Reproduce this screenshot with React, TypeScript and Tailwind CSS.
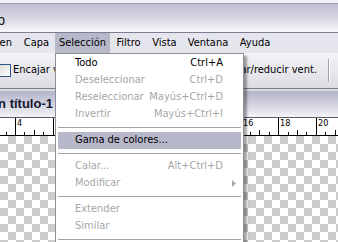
import React from "react";

const UI = "font-['DejaVu_Sans_Condensed','DejaVu_Sans',sans-serif] [font-stretch:condensed]";

type Item =
  | { sep: true }
  | { sep?: false; t: string; s?: string; en?: boolean; hl?: boolean; sub?: boolean };

const items: Item[] = [
  { t: "Todo", s: "Ctrl+A", en: true },
  { t: "Deseleccionar", s: "Ctrl+D" },
  { t: "Reseleccionar", s: "Mayús+Ctrl+D" },
  { t: "Invertir", s: "Mayús+Ctrl+I" },
  { sep: true },
  { t: "Gama de colores...", en: true, hl: true },
  { sep: true },
  { t: "Calar...", s: "Alt+Ctrl+D" },
  { t: "Modificar", sub: true },
  { sep: true },
  { t: "Extender" },
  { t: "Similar" },
  { sep: true },
  { t: "Transformar selección" },
];

function Ruler() {
  const majors: number[] = [];
  for (let i = -1; i < 10; i++) majors.push(15 + i * 37.6);
  const ticks: React.ReactNode[] = [];
  majors.forEach((m, i) => {
    const x = Math.round(m) + 0.5;
    ticks.push(<line key={"M" + i} x1={x} y1={0} x2={x} y2={17} stroke="#000" />);
    ticks.push(
      <text key={"L" + i} x={Math.round(m) + 2} y={8} fontSize={9} fill="#000" fontFamily="DejaVu Sans Condensed, DejaVu Sans, sans-serif">
        {2 + i * 2}
      </text>
    );
    [1, 2, 3].forEach((q) => {
      const tx = Math.round(m + q * 9.4) + 0.5;
      const h = q === 2 ? 5 : 3;
      ticks.push(<line key={"m" + i + q} x1={tx} y1={17 - h} x2={tx} y2={17} stroke="#000" />);
    });
  });
  return (
    <svg width={338} height={18} className="block" shapeRendering="crispEdges">
      <rect x={0} y={0} width={338} height={18} fill="#fff" />
      {ticks}
      <line x1={0} y1={17.5} x2={338} y2={17.5} stroke="#000" />
    </svg>
  );
}

function Checker() {
  return (
    <svg width={338} height={110} className="block" shapeRendering="crispEdges">
      <defs>
        <pattern id="chk" x={0} y={0} width={16} height={16} patternUnits="userSpaceOnUse">
          <rect x={0} y={0} width={16} height={16} fill="#ffffff" />
          <rect x={8} y={0} width={8} height={8} fill="#cccccc" />
          <rect x={0} y={8} width={8} height={8} fill="#cccccc" />
        </pattern>
      </defs>
      <rect x={0} y={0} width={338} height={110} fill="url(#chk)" />
    </svg>
  );
}

function Menu() {
  return (
    <div className={`absolute left-[55px] top-[53px] w-[189px] border border-[#8f8f98] bg-white px-[2px] pt-[1px] pb-[2px] shadow-[3px_3px_2px_rgba(0,0,0,0.35)] text-[11px] ${UI}`}>
      {items.map((it, i) =>
        it.sep ? (
          <div key={i} className="h-[9px] flex items-center">
            <div className="h-px w-full bg-[#a4a4a8]" />
          </div>
        ) : (
          <div
            key={i}
            className={`h-[17px] flex items-center justify-between pl-[17px] pr-[18px] ${it.hl ? "bg-[#b8b8cb]" : ""} ${it.en ? "text-black" : "text-[#a6a6a6]"}`}
          >
            <span className="whitespace-nowrap">{it.t}</span>
            {it.s ? <span className="whitespace-nowrap">{it.s}</span> : null}
            {it.sub ? (
              <svg width={4} height={7} className="mr-[-13px]" viewBox="0 0 4 7">
                <path d="M0 0 L4 3.5 L0 7 Z" fill="#a6a6a6" />
              </svg>
            ) : null}
          </div>
        )
      )}
    </div>
  );
}

export default function App() {
  const menubar: { t: string; w: string; hl?: boolean }[] = [
    { t: "Capa", w: "w-[37px]" },
    { t: "Selección", w: "w-[55px]", hl: true },
    { t: "Filtro", w: "w-[37px]" },
    { t: "Vista", w: "w-[35px]" },
    { t: "Ventana", w: "w-[52px]" },
    { t: "Ayuda", w: "w-[42px]" },
  ];
  return (
    <div className={`relative w-[338px] h-[242px] overflow-hidden bg-white text-[11px] text-black ${UI}`}>
      {/* top strip */}
      <div className="h-[3px] bg-[#f1f1f4]" />
      <div className="h-px bg-[#a4a4b8]" />
      {/* title bar */}
      <div className="h-[28px] bg-gradient-to-b from-[#bdbdd1] via-[#d6d6e3] to-[#f7f7fa] flex">
        <div className="w-[5px] overflow-hidden flex justify-end pt-[8px]">
          <span className="whitespace-nowrap text-[14px] leading-[16px] font-['Liberation_Sans',sans-serif] [font-stretch:normal] text-[#111]">Adobe Photoshop</span>
        </div>
      </div>
      <div className="h-px bg-[#7e7e92]" />
      {/* menu bar */}
      <div className="h-[20px] bg-[#e5e5ed] flex items-stretch">
        <div className="w-[18px] overflow-hidden flex justify-end items-center pr-[6px]">
          <span className="whitespace-nowrap">Imagen</span>
        </div>
        {menubar.map((m) => (
          <div key={m.t} className={`${m.w} flex items-center justify-center whitespace-nowrap ${m.hl ? "bg-[#b8b8cb]" : ""}`}>
            {m.t}
          </div>
        ))}
      </div>
      {/* options bar */}
      <div className="h-[35px] bg-gradient-to-b from-[#f3f3f6] to-[#dcdce3] flex items-center">
        <div className="ml-[-2px] w-[13px] h-[13px] border border-[#2a5a8a] bg-gradient-to-br from-[#dcdcd7] to-white" />
        <span className="ml-[2px] whitespace-nowrap">Encajar ventanas</span>
        <div className="ml-auto flex items-center h-full">
          <div className="w-[13px] h-[13px] border border-[#2a5a8a] bg-white mr-[4px]" />
          <span className="whitespace-nowrap">Ampliar/reducir vent.</span>
          <div className="ml-[11px] mr-[8px] flex h-[23px]">
            <div className="w-px bg-[#a0a0a8]" />
            <div className="w-px bg-white" />
          </div>
        </div>
      </div>
      <div className="h-px bg-[#7c7c8c]" />
      <div className="h-[2px] bg-[#dadae2]" />
      {/* document title */}
      <div className="h-[26px] bg-gradient-to-b from-[#b3b3ca] via-[#d2d2e0] to-[#f3f3f7] flex items-center">
        <div className="w-[53px] overflow-hidden flex justify-end">
          <span className="whitespace-nowrap font-bold text-[13px] text-[#16162c] font-['Liberation_Sans',sans-serif] [font-stretch:normal]">Sin título-1</span>
        </div>
      </div>
      <div className="h-px bg-[#5c5c6c]" />
      {/* ruler */}
      <Ruler />
      {/* canvas */}
      <Checker />
      <Menu />
    </div>
  );
}
